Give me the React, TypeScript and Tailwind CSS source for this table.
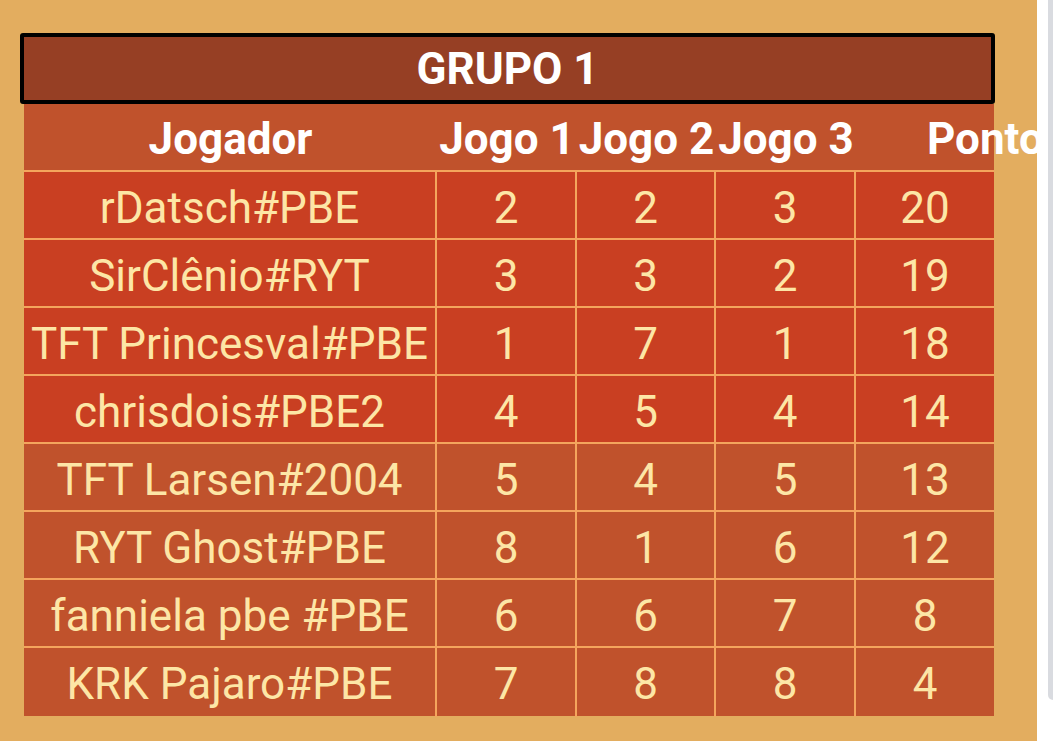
const rows = [
  { name: 'rDatsch#PBE', j1: 2, j2: 2, j3: 3, pts: 20, top: true },
  { name: 'SirClênio#RYT', j1: 3, j2: 3, j3: 2, pts: 19, top: true },
  { name: 'TFT Princesval#PBE', j1: 1, j2: 7, j3: 1, pts: 18, top: true },
  { name: 'chrisdois#PBE2', j1: 4, j2: 5, j3: 4, pts: 14, top: true },
  { name: 'TFT Larsen#2004', j1: 5, j2: 4, j3: 5, pts: 13, top: false },
  { name: 'RYT Ghost#PBE', j1: 8, j2: 1, j3: 6, pts: 12, top: false },
  { name: 'fanniela pbe #PBE', j1: 6, j2: 6, j3: 7, pts: 8, top: false },
  { name: 'KRK Pajaro#PBE', j1: 7, j2: 8, j3: 8, pts: 4, top: false },
]

const cols = 'grid grid-cols-[413px_140px_139px_140px_138px]'
const cell = 'flex items-center justify-center pt-[3px] border-[#f4a55d]'

export default function App() {
  return (
    <div className="flex w-[1053px] h-[741px] overflow-hidden font-['Roboto',sans-serif]">
      <main className="w-[1037px] h-full overflow-hidden bg-[#e3ad5f] pt-[33px] pl-[20px]">
        <div className="w-[975px] h-[71px] border-4 border-black rounded-[3px] bg-[#963f24] flex items-center justify-center">
          <span className="text-[44px] font-bold text-white leading-none">GRUPO 1</span>
        </div>

        <div className="ml-[4px] w-[970px]">
          <div className={`${cols} h-[68px] bg-[#c0522c] border-b-2 border-[#f4a55d] text-white font-bold text-[44px] whitespace-nowrap`}>
            <div className="flex items-center justify-center pt-[2px]">Jogador</div>
            <div className="flex items-center justify-center pt-[2px]">Jogo 1</div>
            <div className="flex items-center justify-center pt-[2px]">Jogo 2</div>
            <div className="flex items-center justify-center pt-[2px]">Jogo 3</div>
            <div className="flex items-center pl-[71px] pt-[2px]">Pontos</div>
          </div>

          {rows.map((r, i) => (
            <div
              key={r.name}
              className={`${cols} h-[68px] text-[44px] text-[#fde6a6] ${r.top ? 'bg-[#c93f22]' : 'bg-[#c0522c]'} ${i < rows.length - 1 ? 'border-b-2 border-[#f4a55d]' : ''}`}
            >
              <div className={`${cell} border-r-2 whitespace-nowrap`}>{r.name}</div>
              <div className={`${cell} border-r-2`}>{r.j1}</div>
              <div className={`${cell} border-r-2`}>{r.j2}</div>
              <div className={`${cell} border-r-2`}>{r.j3}</div>
              <div className={cell}>{r.pts}</div>
            </div>
          ))}
        </div>
      </main>

      <aside className="w-[16px] h-full bg-white pl-[11px]">
        <div className="w-[5px] h-[700px] bg-[#d9dbe0] rounded-bl-[5px]" />
      </aside>
    </div>
  )
}
